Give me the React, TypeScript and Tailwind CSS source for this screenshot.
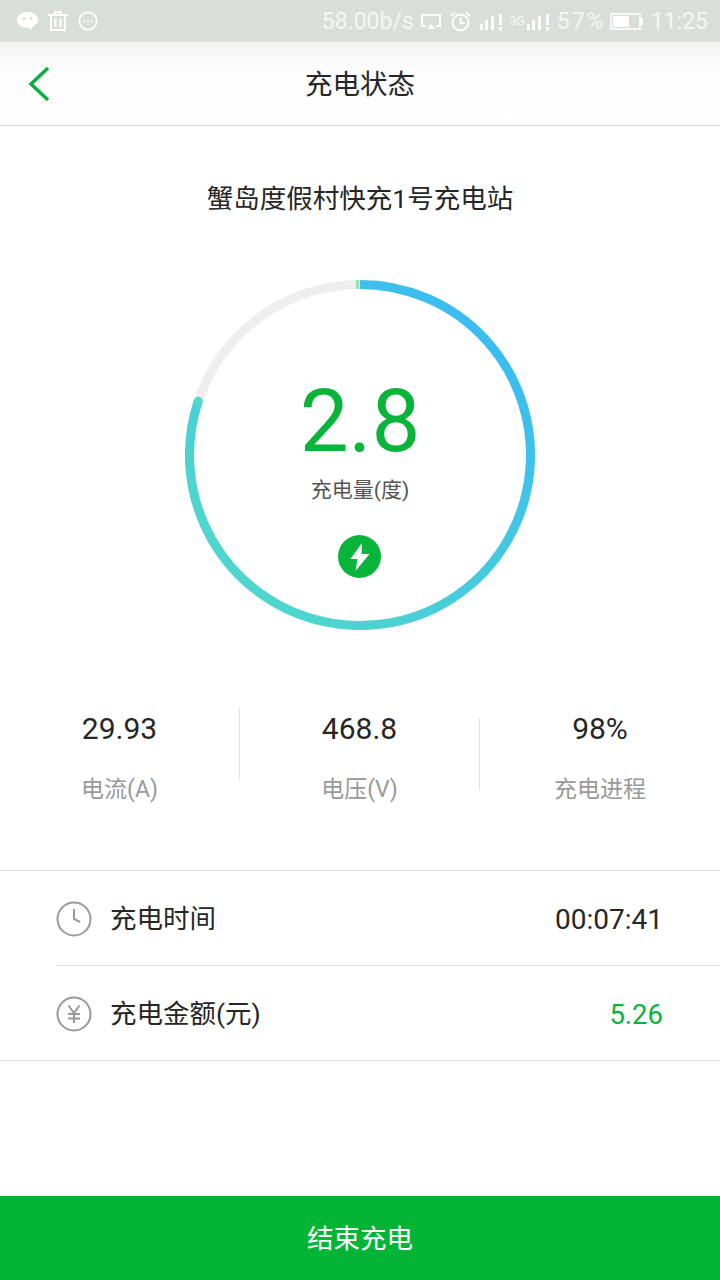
const FONT = "font-['Roboto','Noto_Sans_CJK_SC',sans-serif]";

function Signal() {
  return (
    <svg width="24" height="16" viewBox="0 0 24 16" fill="white">
      <rect x="0" y="10" width="3" height="6" />
      <rect x="5" y="6" width="3" height="10" />
      <rect x="11" y="2" width="3" height="14" />
      <rect x="19" y="0" width="3" height="11" />
      <rect x="19" y="13" width="3" height="3" />
    </svg>
  );
}

function StatusBar() {
  return (
    <div className="flex h-[42px] items-center justify-between bg-[#dadedb] pl-[17px] pr-[12px] text-[#f4f6f4]">
      <div className="flex items-center gap-[10px]">
        <svg width="21" height="20" viewBox="0 0 21 20">
          <path d="M10.500 1C5 1 0 4.300 0 9c0 2.800 1.700 5 4.300 6.400 2 1 3.700 1.300 5.700 1.300 1.500 0 3 .8 5 2.300-.3-1-.3-2-.3-2.800C18.500 14.500 21 12 21 9c0-4.700-5-8-10.500-8z" fill="white" />
          <circle cx="7" cy="7.500" r="1.500" fill="#dadedb" />
          <circle cx="14" cy="7.500" r="1.500" fill="#dadedb" />
        </svg>
        <svg width="20" height="20" viewBox="0 0 20 20" fill="none" stroke="white" strokeWidth="2">
          <path d="M0 4h20M7 4V1h6v3M3 4v15h14V4M7.500 7v9M12.500 7v9" />
        </svg>
        <svg width="20" height="20" viewBox="0 0 20 20" fill="none">
          <circle cx="10" cy="10" r="8.700" stroke="white" strokeWidth="1.800" />
          <circle cx="6" cy="10" r="1.100" fill="white" />
          <circle cx="10" cy="10" r="1.100" fill="white" />
          <circle cx="14" cy="10" r="1.100" fill="white" />
        </svg>
      </div>
      <div className={`flex items-center text-[23px] leading-none ${FONT}`}>
        <span className="w-[91px]">58.00b/s</span>
        <svg className="ml-[8px]" width="20" height="15" viewBox="0 0 20 15" fill="none" stroke="white" strokeWidth="2">
          <path d="M5 12H1V1h18v11h-4" />
          <path d="M6 15h8l-4-5z" fill="white" stroke="none" />
        </svg>
        <svg className="ml-[9px]" width="21" height="21" viewBox="0 0 21 21" fill="none" stroke="white" strokeWidth="1.800">
          <circle cx="10.500" cy="11.500" r="8" />
          <path d="M10.500 6.500v5.500h4M1 5l4-3.500M20 5l-4-3.500" />
        </svg>
        <div className="ml-[9px] mt-[2px]">
          <Signal />
        </div>
        <span className="ml-[6px] w-[17px] text-[12px]">3G</span>
        <div className="mt-[2px]">
          <Signal />
        </div>
        <span className="ml-[6px] w-[52px] tracking-[2px]">57%</span>
        <svg className="ml-[1px]" width="33" height="17" viewBox="0 0 33 17" fill="none">
          <rect x="1" y="1" width="29" height="15" stroke="white" strokeWidth="1.500" />
          <rect x="3" y="3" width="16" height="11" fill="white" />
          <rect x="30" y="5" width="3" height="7" fill="white" />
        </svg>
        <span className="ml-[8px]">11:25</span>
      </div>
    </div>
  );
}

function Ring() {
  return (
    <div className="relative mx-auto h-[350px] w-[350px]">
      <svg width="350" height="350" viewBox="0 0 350 350" fill="none">
        <defs>
          <linearGradient id="ring" gradientUnits="userSpaceOnUse" x1="300" y1="40" x2="40" y2="320">
            <stop offset="0" stopColor="#3abcf2" />
            <stop offset="1" stopColor="#50d9cb" />
          </linearGradient>
        </defs>
        <circle cx="175" cy="175" r="170.500" stroke="#eeeeee" strokeWidth="9" />
        <path d="M175 4.500A170.500 170.500 0 1 1 13.200 121.200" stroke="url(#ring)" strokeWidth="9" />
        <circle cx="13.200" cy="121.200" r="4.500" fill="#50d9cb" />
        <rect x="171" y="0" width="3" height="9" fill="#9cdcae" />
      </svg>
      <div className="absolute inset-0 flex flex-col items-center">
        <div className={`mt-[91px] text-[87px] font-[440] leading-[100px] text-[#09b43a] ${FONT}`}>2.8</div>
        <div className={`mt-[4px] text-[21px] leading-[30px] text-[#555555] ${FONT}`}>充电量(度)</div>
        <div className="-ml-px mt-[30px] flex h-[43px] w-[43px] items-center justify-center rounded-full bg-[#09b43a]">
          <svg width="20" height="28" viewBox="0 0 20 28">
            <path d="M12 0 0.500 16h7l-2 12 14-17h-8z" fill="white" />
          </svg>
        </div>
      </div>
    </div>
  );
}

function Stat({ value, label, className }: { value: string; label: string; className: string }) {
  return (
    <div className={`flex flex-col items-center pt-[4px] ${className} ${FONT}`}>
      <div className="text-[30px] leading-[36px] text-[#262626]">{value}</div>
      <div className="mt-[25px] text-[23px] leading-[36px] text-[#999999]">{label}</div>
    </div>
  );
}

function Row({ icon, label, value, valueClass }: { icon: React.ReactNode; label: string; value: string; valueClass: string }) {
  return (
    <div className={`flex h-[94px] items-center pl-[56px] pr-[57px] pt-[2px] ${FONT}`}>
      {icon}
      <span className="ml-[18px] flex-1 text-[26.500px] text-[#262626]">{label}</span>
      <span className={`mt-[2px] ${valueClass}`}>{value}</span>
    </div>
  );
}

export default function App() {
  return (
    <div className={`flex h-[1280px] w-[720px] flex-col bg-white ${FONT}`}>
      <StatusBar />
      <div className="relative flex h-[84px] items-center justify-center border-b border-[#d8d8d8] bg-gradient-to-b from-[#f1f2f1] via-[#fcfcfc] via-30% to-white">
        <svg className="absolute left-[28px] top-[24px]" width="22" height="36" viewBox="0 0 22 36" fill="none" stroke="#0cae40" strokeWidth="3.500">
          <path d="M20 2 3 18l17 16" />
        </svg>
        <span className="pt-[3px] text-[27.500px] text-[#262626]">充电状态</span>
      </div>
      <div className="mt-[54px] text-center text-[26.500px] leading-[38px] text-[#262626]">蟹岛度假村快充1号充电站</div>
      <div className="mt-[62px]">
        <Ring />
      </div>
      <div className="mt-[77px] flex h-[101px]">
        <Stat value="29.93" label="电流(A)" className="w-[239px]" />
        <div className="h-[72px] w-px bg-[#e2e2e2]" />
        <Stat value="468.8" label="电压(V)" className="w-[239px]" />
        <div className="mt-[11px] h-[72px] w-px bg-[#e2e2e2]" />
        <Stat value="98%" label="充电进程" className="flex-1" />
      </div>
      <div className="mt-[62px] border-y border-[#e0e0e0]">
        <Row
          label="充电时间"
          value="00:07:41"
          valueClass="text-[28px] text-[#262626]"
          icon={
            <svg width="36" height="36" viewBox="0 0 36 36" fill="none" stroke="#999999" strokeWidth="2">
              <circle cx="18" cy="18" r="16.500" />
              <path d="M18 8v10l6 3" />
            </svg>
          }
        />
        <div className="ml-[56px] h-px bg-[#e0e0e0]" />
        <Row
          label="充电金额(元)"
          value="5.26"
          valueClass="text-[27.500px] text-[#09b43a]"
          icon={
            <svg width="36" height="36" viewBox="0 0 36 36" fill="none" stroke="#999999" strokeWidth="2">
              <circle cx="18" cy="18" r="16.500" />
              <path d="M12.500 9.500 18 17l5.500-7.500M18 17v10M12 18h12M12 22.500h12" />
            </svg>
          }
        />
      </div>
      <div className="mt-auto flex h-[84px] items-center justify-center bg-[#04b436] pt-[2px] text-[26.500px] text-white">结束充电</div>
    </div>
  );
}
